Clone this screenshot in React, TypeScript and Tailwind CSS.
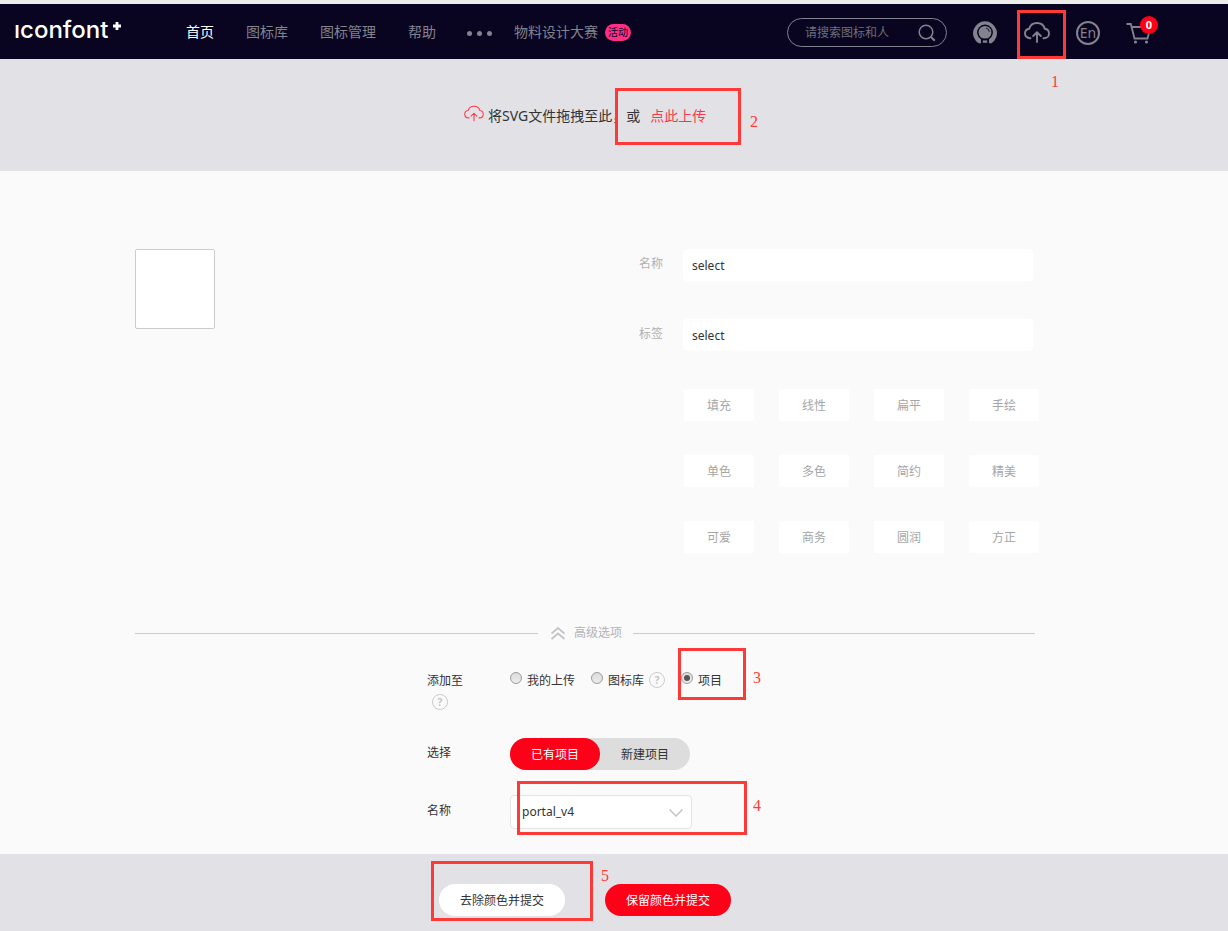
import React from "react";

type MarkerProps = { n: number; box: string; label: string };

function Marker({ n, box, label }: MarkerProps) {
  return (
    <>
      <span className={`pointer-events-none absolute z-10 border-3 border-[#fd3a38] ${box}`} />
      <span
        className={`pointer-events-none absolute z-10 font-['Liberation_Serif',serif] text-base leading-4 text-[#fd3a38] ${label}`}
      >
        {n}
      </span>
    </>
  );
}

function CloudIcon({ className, strokeWidth }: { className: string; strokeWidth: number }) {
  return (
    <svg
      viewBox="0 0 26 21"
      className={className}
      fill="none"
      stroke="currentColor"
      strokeWidth={strokeWidth}
      strokeLinecap="round"
      strokeLinejoin="round"
      aria-hidden="true"
    >
      <path d="M6.500 16.200H6C3 16.200 1 14 1 11.400C1 8.900 2.800 7 5.300 6.700C6.200 3.300 9.200 1 13 1C16.800 1 19.800 3.300 20.700 6.700C23.200 7 25 8.900 25 11.400C25 14 23 16.200 20 16.200H19.500" />
      <path d="M13 20V10.500M9.200 14L13 10.300L16.800 14" />
    </svg>
  );
}

function HelpIcon() {
  return (
    <button
      type="button"
      aria-label="说明"
      className="flex size-4 shrink-0 items-center justify-center rounded-full border border-[#cccccc] text-[10px] leading-none font-bold text-[#c4c4c4]"
    >
      ?
    </button>
  );
}

function Radio({ label, checked = false }: { label: string; checked?: boolean }) {
  return (
    <label className="flex items-center gap-[5px]">
      <input
        type="radio"
        name="target"
        defaultChecked={checked}
        className="relative -mt-1 size-3 shrink-0 appearance-none rounded-full border border-[#9c9c9c] bg-linear-to-b from-[#dcdcdc] to-[#ececec] before:absolute before:inset-[2px] before:rounded-full checked:before:bg-[#555555]"
      />
      <span className="pt-0.5">{label}</span>
    </label>
  );
}

const navItems = ["图标库", "图标管理", "帮助"];
const tags = ["填充", "线性", "扁平", "手绘", "单色", "多色", "简约", "精美", "可爱", "商务", "圆润", "方正"];

function Header() {
  return (
    <header className="border-t-4 border-[#ececec] bg-[#090520]">
      <div className="flex h-[55px] items-center pr-[70px] pl-[14px] text-[#83828f]">
        <a href="#home" className="flex w-[172px] items-start pb-1 text-white">
          <span className="font-['Inter',sans-serif] text-2xl leading-7 font-medium">ıconfont</span>
          <svg viewBox="0 0 8 8" className="mt-1.5 ml-[5px] size-2" aria-hidden="true">
            <path d="M4 0V8M0 4H8" stroke="currentColor" strokeWidth="2.800" />
          </svg>
        </a>
        <nav className="flex items-center gap-8 text-sm leading-5 whitespace-nowrap">
          <a href="#home" className="text-white">首页</a>
          {navItems.map((item) => (
            <a key={item} href={`#${item}`}>{item}</a>
          ))}
          <button type="button" aria-label="更多" className="-ml-px flex gap-[5px]">
            <span className="mt-[3px] size-[5px] rounded-full bg-current" />
            <span className="mt-[3px] size-[5px] rounded-full bg-current" />
            <span className="mt-[3px] size-[5px] rounded-full bg-current" />
          </button>
          <a href="#contest" className="-ml-2.5 flex items-center gap-[7px]">
            物料设计大赛
            <span className="mt-0.5 rounded-full bg-[#ff2f86] px-[3px] text-[10px] leading-[17px] text-[#090520]">活动</span>
          </a>
        </nav>
        <div className="ml-auto flex items-center pt-0.5">
          <form role="search" className="flex h-[29px] w-40 items-center rounded-full border border-[#83828f] pr-2.5 pl-[17px]">
            <input
              type="text"
              aria-label="请搜索图标和人"
              placeholder="请搜索图标和人"
              className="w-full min-w-0 bg-transparent text-xs outline-none placeholder:text-[#6f6e7c]"
            />
            <button type="button" aria-label="搜索" className="shrink-0">
              <svg viewBox="0 0 18 18" className="size-[18px]" fill="none" stroke="currentColor" strokeWidth="1.500" aria-hidden="true">
                <circle cx="8" cy="8" r="6.800" />
                <path d="M13 13L16.800 16.800" strokeWidth="2" />
              </svg>
            </button>
          </form>
          <a href="#github" aria-label="GitHub" className="ml-[26px]">
            <svg viewBox="0 0 24 24" className="size-6" aria-hidden="true">
              <path
                fill="currentColor"
                d="M12 0.300A11.900 11.900 0 0 0 5.500 22.200H8V18.300A7.900 7.900 0 1 1 16 18.300V22.200H18.500A11.900 11.900 0 0 0 12 0.300Z"
              />
              <circle cx="12" cy="11.400" r="6.400" fill="currentColor" />
              <path d="M13 7A4.600 4.600 0 0 1 16.400 10.800" fill="none" stroke="#090520" strokeWidth="0.900" />
              <path d="M8 17.600H16V24H8Z" fill="#090520" />
              <path fill="currentColor" d="M9.800 19.400H14.200V21.800H9.800Z" />
            </svg>
          </a>
          <div className="relative ml-[27px]">
            <button type="button" aria-label="上传" className="block">
              <CloudIcon className="h-[21px] w-[26px]" strokeWidth={1.9} />
            </button>
            <Marker n={1} box="-top-3 -left-[7px] h-[49px] w-[49px]" label="top-[52px] left-[27px]" />
          </div>
          <button
            type="button"
            aria-label="English"
            className="ml-[26px] flex size-6 items-center justify-center rounded-full border-2 border-current text-sm leading-none"
          >
            En
          </button>
          <a href="#cart" aria-label="购物车" className="relative ml-[26px] w-8">
            <svg viewBox="0 0 26 22" className="h-[22px] w-[26px]" fill="none" stroke="currentColor" strokeWidth="1.800" aria-hidden="true">
              <path d="M0.500 2H4.800L8.500 16.500H21.500L24.500 5H6" />
              <circle cx="9.500" cy="20" r="1.600" fill="currentColor" stroke="none" />
              <circle cx="20.500" cy="20" r="1.600" fill="currentColor" stroke="none" />
            </svg>
            <span className="absolute -top-1.5 right-0 flex size-[18px] items-center justify-center rounded-full bg-[#ff0019] text-[11px] leading-none font-bold text-white">
              0
            </span>
          </a>
        </div>
      </div>
    </header>
  );
}

function DropZone() {
  return (
    <section className="bg-[#e2e1e6] pt-[46px] pb-[45px] pl-[464px] text-sm leading-5 text-[#333333]">
      <div className="relative flex whitespace-nowrap">
        <CloudIcon className="h-[17px] w-5 text-[#f8394d]" strokeWidth={1.4} />
        <span className="ml-1 pt-px">将SVG文件拖拽至此，或</span>
        <a href="#upload" className="ml-2.5 pt-px text-[#f8394d]">点此上传</a>
        <Marker n={2} box="-top-[17px] left-[151px] h-[57px] w-[126px]" label="top-[9px] left-[286px]" />
      </div>
    </section>
  );
}

function Field({ id, label }: { id: string; label: string }) {
  return (
    <div className="flex h-8 items-center">
      <label htmlFor={id} className="w-11 pb-0.5 text-[#b0b0b0]">{label}</label>
      <input id={id} type="text" defaultValue="select" className="h-8 w-[350px] rounded bg-white px-[9px] text-[#333333] outline-none" />
    </div>
  );
}

function IconDetails() {
  return (
    <section className="flex w-[904px] justify-between">
      <div className="size-20 rounded-xs border border-[#cccccc] bg-white" />
      <div className="flex flex-col gap-[38px]">
        <Field id="icon-name" label="名称" />
        <Field id="icon-tags" label="标签" />
        <div className="ml-[45px] grid grid-cols-4 gap-x-[25px] gap-y-[34px]">
          {tags.map((tag) => (
            <button key={tag} type="button" className="h-8 w-[70px] rounded-xs bg-white pt-0.5 text-[#a6a6a6]">
              {tag}
            </button>
          ))}
        </div>
      </div>
    </section>
  );
}

function AdvancedOptions() {
  return (
    <section>
      <button type="button" className="mt-[70px] flex h-5 w-[900px] items-center text-[#b3b3b3]">
        <span className="h-px w-[403px] bg-[#cccccc]" />
        <svg viewBox="0 0 14 13" className="mr-[9px] ml-[13px] h-[13px] w-[14px]" fill="none" stroke="#c4c4c4" strokeWidth="1.800" aria-hidden="true">
          <path d="M0.500 6.500L7 1L13.500 6.500M0.500 12L7 6.500L13.500 12" />
        </svg>
        高级选项
        <span className="ml-[11px] h-px flex-1 bg-[#cccccc]" />
      </button>
      <div className="ml-[292px] grid grid-cols-[83px_1fr] text-[#333333]">
        <div className="mt-7 leading-5">
          添加至
          <div className="mt-[3px] ml-[5px]">
            <HelpIcon />
          </div>
        </div>
        <div className="relative mt-[27px] flex h-5 items-center">
          <Radio label="我的上传" />
          <div className="mx-4 flex items-center gap-[5px]">
            <Radio label="图标库" />
            <HelpIcon />
          </div>
          <Radio label="项目" checked />
          <Marker n={3} box="-top-[22px] left-[168px] h-[52px] w-[68px]" label="top-0 left-[243px]" />
        </div>
        <div className="mt-[29px] leading-7">选择</div>
        <div className="mt-7 flex w-[180px] rounded-full bg-[#dddddd]">
          <button type="button" className="h-8 w-[90px] rounded-full bg-[#ff0019] pt-0.5 text-white">已有项目</button>
          <button type="button" className="h-8 w-[90px] rounded-full pt-0.5">新建项目</button>
        </div>
        <label htmlFor="project" className="mt-[25px] leading-8">名称</label>
        <div className="relative mt-[25px] w-[182px]">
          <select id="project" className="block h-[34px] w-full appearance-none rounded border border-[#e4e4e4] bg-white pl-[11px] outline-none">
            <option>portal_v4</option>
          </select>
          <svg viewBox="0 0 14 8" className="pointer-events-none absolute top-[14px] right-[9px] h-2 w-[14px]" fill="none" stroke="#c4c4c4" strokeWidth="1.500" aria-hidden="true">
            <path d="M0.500 0.500L7 7L13.500 0.500" />
          </svg>
          <Marker n={4} box="-top-[14px] left-[7px] h-[54px] w-[230px]" label="top-[3px] left-[243px]" />
        </div>
      </div>
    </section>
  );
}

function SubmitBar() {
  return (
    <footer className="mt-[25px] bg-[#e2e1e6] pt-[30px] pb-[15px] pl-[439px]">
      <div className="relative flex gap-10">
        <button type="button" className="h-8 w-[126px] rounded-full bg-white pt-0.5 text-[#333333]">去除颜色并提交</button>
        <button type="button" className="h-8 w-[126px] rounded-full bg-[#ff0019] pt-0.5 text-white">保留颜色并提交</button>
        <Marker n={5} box="-top-[23px] -left-2 h-[60px] w-[162px]" label="-top-4 left-[162px]" />
      </div>
    </footer>
  );
}

export default function App() {
  return (
    <div className="bg-[#fafafa] font-['Noto_Sans','Noto_Sans_CJK_SC',sans-serif] text-xs">
      <Header />
      <DropZone />
      <main className="pt-[78px] pl-[135px]">
        <IconDetails />
        <AdvancedOptions />
      </main>
      <SubmitBar />
    </div>
  );
}
